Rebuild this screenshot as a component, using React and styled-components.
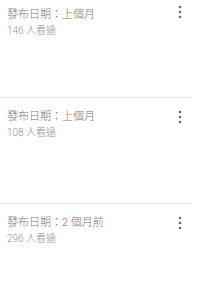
import React from "react";
import styled, { createGlobalStyle } from "styled-components";

const Global = createGlobalStyle`
  html, body { margin: 0; padding: 0; background: #fff; }
  body { font-family: Roboto, "Noto Sans CJK TC", sans-serif; }
`;

const Viewport = styled.div`
  width: 211px;
  height: 300px;
  overflow: hidden;
  background: #fff;
`;

const List = styled.div`
  display: flex;
  flex-direction: column;
`;

const Card = styled.div`
  width: 192px;
  height: ${(p) => (p.$first ? 97 : 105)}px;
  border-bottom: 1px solid #e3e3e3;
  display: flex;
  align-items: flex-start;
`;

const Info = styled.div`
  flex: 1;
  padding: ${(p) => (p.$first ? 7 : 11)}px 0 0 7px;
  display: flex;
  flex-direction: column;
`;

const Title = styled.div`
  font-size: 11px;
  font-weight: 300;
  line-height: 16px;
  color: #757575;
  white-space: nowrap;
`;

const Views = styled.div`
  font-size: 10px;
  font-weight: 300;
  line-height: 15px;
  color: #8f8f8f;
  white-space: nowrap;
`;

const MenuButton = styled.div`
  width: 20px;
  height: 20px;
  margin: ${(p) => (p.$first ? 2 : 9)}px 2px 0 0;
  display: flex;
  align-items: center;
  justify-content: center;
`;

const MoreVert = () => (
  <svg width="20" height="20" viewBox="0 0 24 24" fill="#6a6a6a">
    <circle cx="12" cy="6" r="1.6" />
    <circle cx="12" cy="12" r="1.6" />
    <circle cx="12" cy="18" r="1.6" />
  </svg>
);

const items = [
  { date: "上個月", views: 146 },
  { date: "上個月", views: 108 },
  { date: "2 個月前", views: 296 },
];

export default function App() {
  return (
    <Viewport>
      <Global />
      <List>
        {items.map((it, i) => (
          <Card key={i} $first={i === 0}>
            <Info $first={i === 0}>
              <Title>發布日期：{it.date}</Title>
              <Views>{it.views} 人看過</Views>
            </Info>
            <MenuButton $first={i === 0}>
              <MoreVert />
            </MenuButton>
          </Card>
        ))}
      </List>
    </Viewport>
  );
}
